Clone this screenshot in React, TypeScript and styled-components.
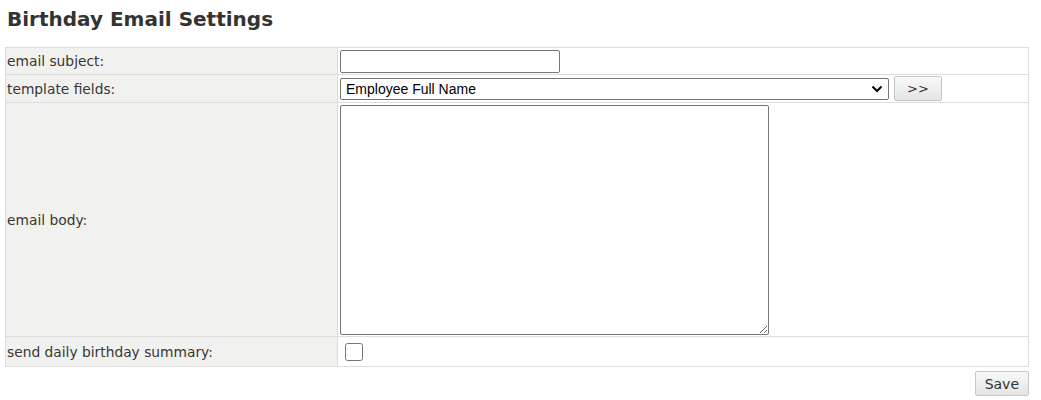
import React from 'react';
import styled, { createGlobalStyle } from 'styled-components';

const GlobalStyle = createGlobalStyle`
  body {
    margin: 0;
    padding: 0 12px 0 5px;
    background: #fff;
    font-family: "DejaVu Sans", Verdana, sans-serif;
    color: #333;
  }
`;

const Title = styled.h2`
  margin: 6px 0 0 2px;
  height: 41px;
  font-size: 20px;
  font-weight: bold;
  color: #333;
  line-height: 26px;
`;

const Table = styled.table`
  width: 100%;
  border-collapse: collapse;
  border: 1px solid #dddddb;
`;

const Row = styled.tr<{ h: number }>`
  height: ${({ h }) => h}px;
`;

const Label = styled.td`
  width: 329px;
  background: #f1f1ef;
  border: 1px solid #dddddb;
  font-size: 13.8px;
  color: #3a3633;
  padding: 0 1px;
  vertical-align: middle;
`;

const Cell = styled.td`
  border: 1px solid #dddddb;
  padding: 1px 2px;
  vertical-align: middle;
`;

const TextInput = styled.input`
  box-sizing: border-box;
  width: 220px;
  height: 23px;
  border: 1px solid #767676;
  border-radius: 2px;
  display: block;
`;

const FieldLine = styled.div`
  display: flex;
  align-items: center;
  gap: 5px;
`;

const SelectWrap = styled.div`
  position: relative;
  width: 549px;
  height: 22px;
`;

const Select = styled.select`
  appearance: none;
  box-sizing: border-box;
  width: 100%;
  height: 100%;
  border: 1px solid #767676;
  border-radius: 2px;
  font-family: "Liberation Sans", Arial, sans-serif;
  font-size: 14px;
  color: #000;
  padding: 0 24px 0 5px;
  background: #fff;
`;

const Chevron = styled.svg`
  position: absolute;
  right: 6px;
  top: 7px;
  width: 12px;
  height: 8px;
  pointer-events: none;
`;

const SmallButton = styled.button<{ big?: boolean }>`
  height: 25px;
  padding: 0 ${({ big }) => (big ? 9 : 12)}px;
  background: linear-gradient(#f9f9f9, #e4e4e4);
  border: 1px solid #c6c6c6;
  border-radius: 2px;
  font-family: "DejaVu Sans", Verdana, sans-serif;
  font-size: ${({ big }) => (big ? 14 : 13)}px;
  color: #333;
`;

const TextArea = styled.textarea`
  box-sizing: border-box;
  display: block;
  width: 429px;
  height: 230px;
  border: 1px solid #767676;
  border-radius: 2px;
`;

const Check = styled.input`
  width: 18px;
  height: 18px;
  margin: 4px 0 4px 5px;
  display: block;
`;

const Footer = styled.div`
  display: flex;
  justify-content: flex-end;
  padding-top: 4px;
`;

export default function App() {
  return (
    <>
      <GlobalStyle />
      <Title>Birthday Email Settings</Title>
      <Table>
        <tbody>
          <Row h={27}>
            <Label>email subject:</Label>
            <Cell>
              <TextInput type="text" />
            </Cell>
          </Row>
          <Row h={28}>
            <Label>template fields:</Label>
            <Cell>
              <FieldLine>
                <SelectWrap>
                  <Select defaultValue="Employee Full Name">
                    <option>Employee Full Name</option>
                    <option>Employee First Name</option>
                    <option>Employee Last Name</option>
                  </Select>
                  <Chevron viewBox="0 0 12 8">
                    <path d="M1.5 1.5 L6 6 L10.5 1.5" fill="none" stroke="#000" strokeWidth="2" />
                  </Chevron>
                </SelectWrap>
                <SmallButton>&gt;&gt;</SmallButton>
              </FieldLine>
            </Cell>
          </Row>
          <Row h={234}>
            <Label>email body:</Label>
            <Cell>
              <TextArea />
            </Cell>
          </Row>
          <Row h={30}>
            <Label>send daily birthday summary:</Label>
            <Cell>
              <Check type="checkbox" />
            </Cell>
          </Row>
        </tbody>
      </Table>
      <Footer>
        <SmallButton big>Save</SmallButton>
      </Footer>
    </>
  );
}
